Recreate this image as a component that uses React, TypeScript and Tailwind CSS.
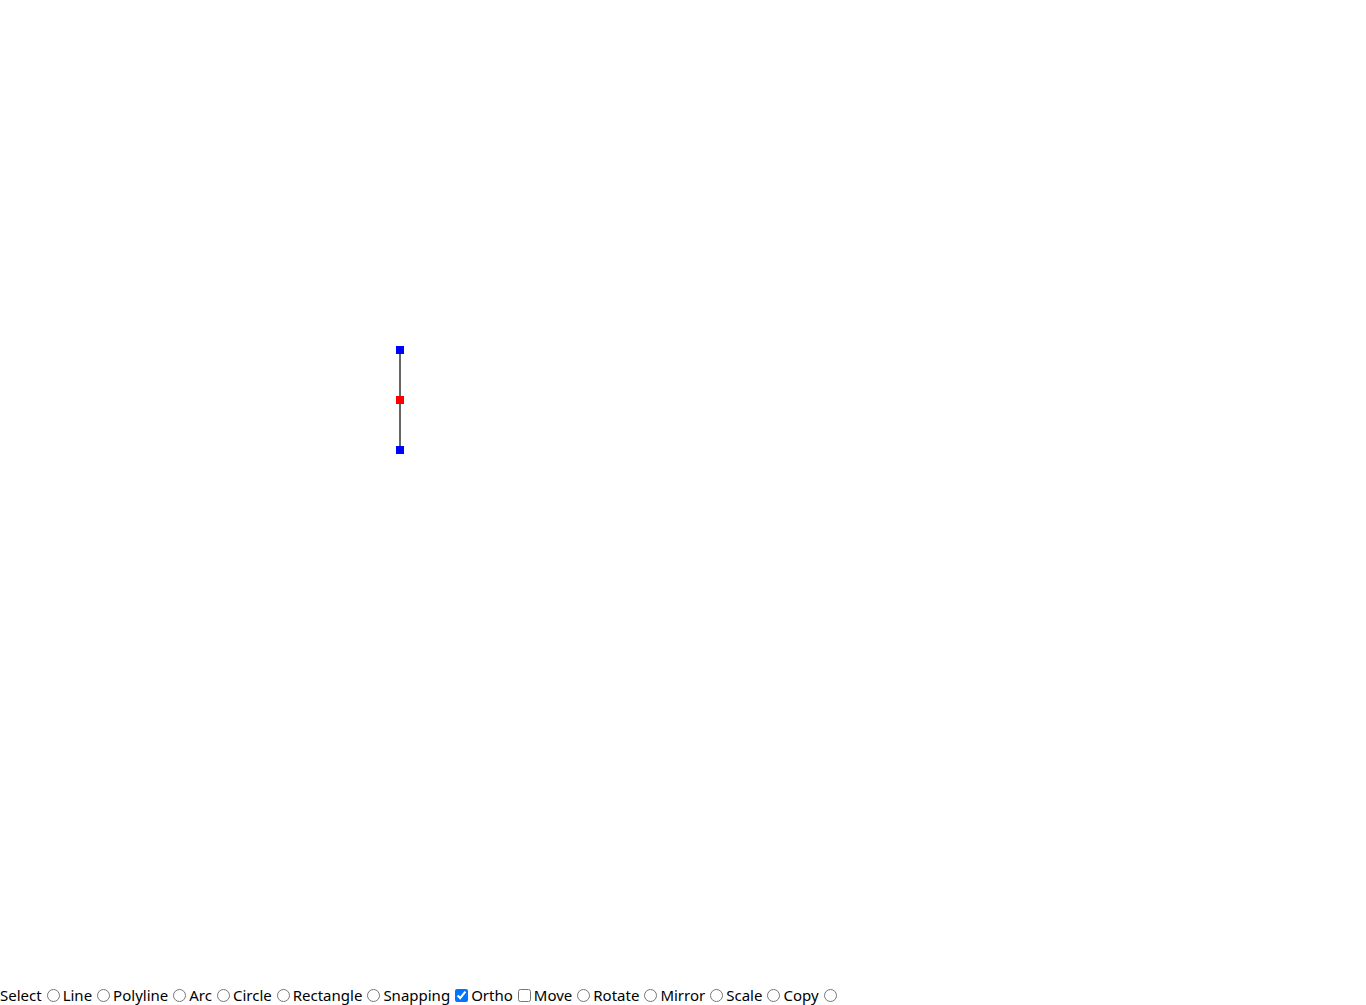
import React, { useState } from 'react';

const TOOLS = ['Select', 'Line', 'Polyline', 'Arc', 'Circle', 'Rectangle'];
const EDITS = ['Move', 'Rotate', 'Mirror', 'Scale', 'Copy'];

const Handle: React.FC<{ x: number; y: number; color: string }> = ({ x, y, color }) => (
  <rect x={x - 4} y={y - 4} width={8} height={8} fill={color} />
);

export default function App() {
  const [mode, setMode] = useState('');
  const [snapping, setSnapping] = useState(true);
  const [ortho, setOrtho] = useState(false);

  return (
    <div className="flex flex-col w-full h-[1005px] bg-white text-black" style={{ fontFamily: '"Noto Sans", "Open Sans", sans-serif' }}>
      <svg className="block w-full h-[984px] shrink-0" width="1366" height="984">
        <line x1={400} y1={350} x2={400} y2={450} stroke="#333" strokeWidth={1.5} />
        <Handle x={400} y={350} color="#0000ff" />
        <Handle x={400} y={400} color="#ff0000" />
        <Handle x={400} y={450} color="#0000ff" />
      </svg>
      <div className="flex items-center text-[15px] leading-[21px] whitespace-nowrap pt-[1px]">
        {TOOLS.map((t) => (
          <label key={t} className="flex items-center">
            {t}
            <input
              type="radio"
              name="mode"
              checked={mode === t}
              onChange={() => setMode(t)}
              className="w-[13px] h-[13px] ml-[5px] mr-[3px]"
            />
          </label>
        ))}
        <label className="flex items-center">
          Snapping
          <input type="checkbox" checked={snapping} onChange={() => setSnapping(!snapping)} className="w-[13px] h-[13px] ml-[5px] mr-[3px]" />
        </label>
        <label className="flex items-center">
          Ortho
          <input type="checkbox" checked={ortho} onChange={() => setOrtho(!ortho)} className="w-[13px] h-[13px] ml-[5px] mr-[3px]" />
        </label>
        {EDITS.map((t) => (
          <label key={t} className="flex items-center">
            {t}
            <input
              type="radio"
              name="mode"
              checked={mode === t}
              onChange={() => setMode(t)}
              className="w-[13px] h-[13px] ml-[5px] mr-[3px]"
            />
          </label>
        ))}
      </div>
    </div>
  );
}
